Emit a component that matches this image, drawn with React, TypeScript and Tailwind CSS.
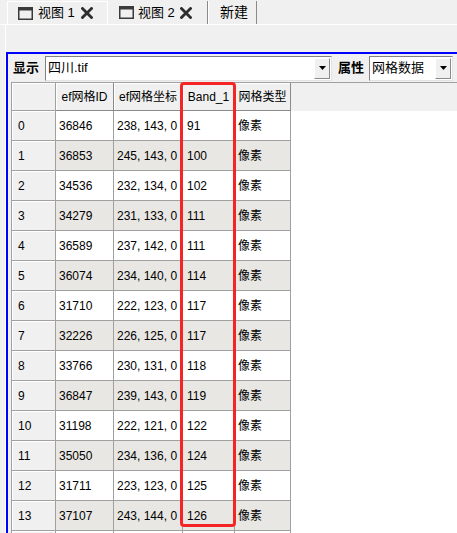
import React from "react";

const rows: [string, string, string, string, string][] = [
  ["0", "36846", "238, 143, 0", "91", "像素"],
  ["1", "36853", "245, 143, 0", "100", "像素"],
  ["2", "34536", "232, 134, 0", "102", "像素"],
  ["3", "34279", "231, 133, 0", "111", "像素"],
  ["4", "36589", "237, 142, 0", "111", "像素"],
  ["5", "36074", "234, 140, 0", "114", "像素"],
  ["6", "31710", "222, 123, 0", "117", "像素"],
  ["7", "32226", "226, 125, 0", "117", "像素"],
  ["8", "33766", "230, 131, 0", "118", "像素"],
  ["9", "36847", "239, 143, 0", "119", "像素"],
  ["10", "31198", "222, 121, 0", "122", "像素"],
  ["11", "35050", "234, 136, 0", "124", "像素"],
  ["12", "31711", "223, 123, 0", "125", "像素"],
  ["13", "37107", "243, 144, 0", "126", "像素"],
  ["", "", "", "", ""],
];

function WinIcon() {
  return (
    <svg width="15" height="13" viewBox="0 0 15 13" className="shrink-0">
      <rect x="0.75" y="0.75" width="13.5" height="11.5" fill="none" stroke="#3a3a3a" strokeWidth="1.5" />
      <rect x="0" y="0" width="15" height="3.5" fill="#3a3a3a" />
    </svg>
  );
}

function CloseX() {
  return (
    <svg width="12" height="12" viewBox="0 0 12 12" className="shrink-0">
      <path d="M1.5 1.5 L10.5 10.5 M10.5 1.5 L1.5 10.5" stroke="#2e2e2e" strokeWidth="2.8" strokeLinecap="square" />
    </svg>
  );
}

function DropBtn() {
  return (
    <div className="w-[16px] h-[21px] bg-[#f0f0f0] border-t border-l border-white border-r border-b border-r-[#8a8a8a] border-b-[#8a8a8a] flex items-center justify-center shrink-0">
      <svg width="7" height="4" viewBox="0 0 7 4">
        <path d="M0 0 L7 0 L3.5 4 Z" fill="#000" />
      </svg>
    </div>
  );
}

export default function App() {
  const font = { fontFamily: '"Liberation Sans", "Noto Sans CJK SC", sans-serif' };
  return (
    <div className="w-[457px] h-[533px] bg-[#f0f0f0] overflow-hidden relative text-black" style={font}>
      {/* Tab bar */}
      <div className="h-[25px] flex items-end pl-[7px] border-b border-white text-[13px]">
        <div className="h-[23px] w-[101px] flex items-center pl-[10px] border-t border-l border-r border-white">
          <WinIcon />
          <span className="ml-[5px] w-[43px] whitespace-nowrap">视图 1</span>
          <CloseX />
        </div>
        <div className="h-[23px] w-[100px] flex items-center pl-[11px] border-r border-[#8a8a8a]">
          <WinIcon />
          <span className="ml-[4px] w-[42px] whitespace-nowrap">视图 2</span>
          <CloseX />
        </div>
        <div className="h-[23px] w-[49px] flex items-center pl-[11px] border-l border-white border-r border-r-[#8a8a8a] text-[14px]">
          新建
        </div>
      </div>

      <div className="ml-[5px] border-l border-white">
        <div className="h-[27px]" />
        {/* Blue frame */}
        <div className="border-t-2 border-l-2 border-[#0000ff]">
          {/* toolbar */}
          <div className="h-[28px] flex items-center pl-[5px] text-[13px]">
            <span className="font-bold w-[27px] whitespace-nowrap">显示</span>
            <div className="ml-[5px] w-[287px] h-[25px] bg-white border border-t-[#828282] border-l-[#828282] border-r-[#e3e3e3] border-b-[#e3e3e3] flex items-center pl-[2px] pr-[1px]">
              <span className="flex-1 whitespace-nowrap">四川.tif</span>
              <DropBtn />
            </div>
            <span className="ml-[6px] font-bold w-[25px] whitespace-nowrap">属性</span>
            <div className="ml-[6px] w-[84px] h-[25px] bg-white border border-t-[#828282] border-l-[#828282] border-r-[#e3e3e3] border-b-[#e3e3e3] flex items-center pl-[2px] pr-[1px]">
              <span className="flex-1 whitespace-nowrap">网格数据</span>
              <DropBtn />
            </div>
          </div>

          {/* grid */}
          <div className="ml-[3px] border-t border-l border-[#a0a0a0] bg-white text-[12px]">
            <div className="h-[28px] flex bg-[#f0f0f0]">
              <div className="w-[44px] h-full border-r border-b border-[#a0a0a0] shadow-[inset_1px_1px_0_#ffffff]" />
              {["ef网格ID", "ef网格坐标", "Band_1", "网格类型"].map((h, i) => (
                <div
                  key={h}
                  className={`${["w-[58px]", "w-[69px]", "w-[52px]", "w-[56px]"][i]} h-full border-r border-b border-r-[#8a8a8a] border-b-[#8a8a8a] shadow-[inset_1px_1px_0_#ffffff] flex items-center justify-center whitespace-nowrap overflow-hidden`}
                >
                  {h}
                </div>
              ))}
              <div className="flex-1 h-full" />
            </div>
            {rows.map((r, idx) => (
              <div key={idx} className="h-[30px] flex">
                <div className="w-[44px] h-full bg-[#f0f0f0] border-r border-b border-[#a0a0a0] shadow-[inset_1px_1px_0_#ffffff] flex items-center pl-[6px]">
                  {r[0]}
                </div>
                <div className={`flex ${idx % 2 === 1 ? "bg-[#e8e7e3]" : "bg-white"}`}>
                  <div className="w-[58px] h-full border-r border-b border-[#a0a0a0] flex items-center pl-[3px] whitespace-nowrap overflow-hidden">{r[1]}</div>
                  <div className="w-[69px] h-full border-r border-b border-[#a0a0a0] flex items-center pl-[3px] whitespace-nowrap overflow-hidden">{r[2]}</div>
                  <div className="w-[52px] h-full border-r border-b border-[#a0a0a0] flex items-center pl-[4px] whitespace-nowrap overflow-hidden">{r[3]}</div>
                  <div className="w-[56px] h-full border-r border-b border-[#a0a0a0] flex items-center pl-[3px] whitespace-nowrap overflow-hidden">{r[4]}</div>
                </div>
              </div>
            ))}
          </div>
        </div>
      </div>

      {/* red highlight */}
      <div className="absolute left-[180px] top-[82px] w-[56px] h-[445px] border-[3px] border-[#f52525] rounded-[4px] pointer-events-none" />
    </div>
  );
}
